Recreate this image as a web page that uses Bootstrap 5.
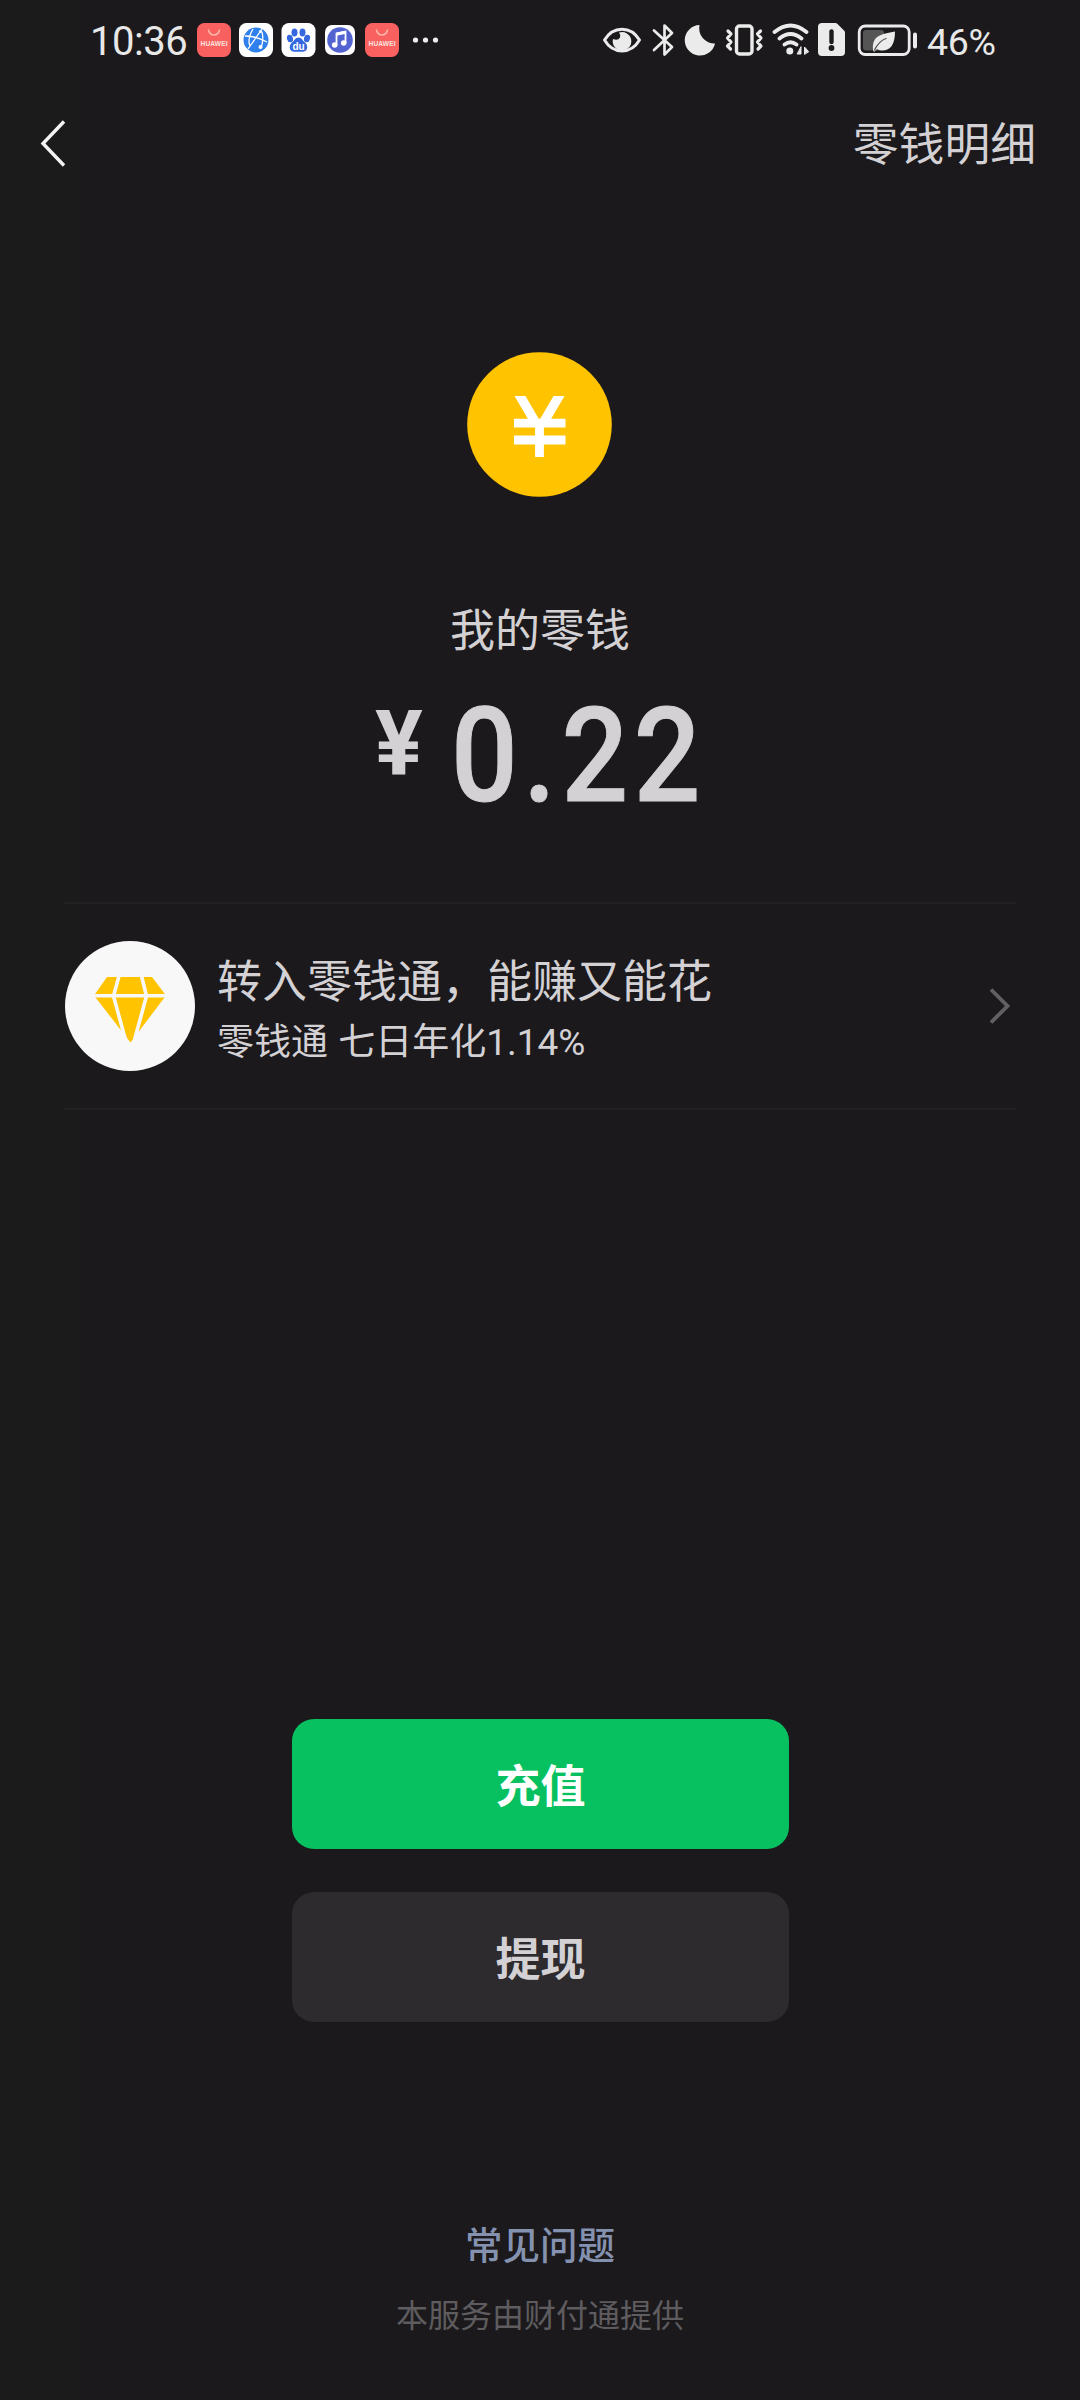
<!DOCTYPE html>
<html lang="zh-CN">
<head>
<meta charset="utf-8">
<meta name="viewport" content="width=device-width, initial-scale=1">
<title>零钱</title>
<link href="https://cdn.jsdelivr.net/npm/bootstrap@5.3.0/dist/css/bootstrap.min.css" rel="stylesheet">
<style>
  body { background: linear-gradient(90deg, #1b1b1b 0, #1b1b1b 74px, #1b191c 84px); color: #d3d1d4; font-family: "Noto Sans CJK SC", sans-serif; height: 2400px; overflow: hidden; }
  svg { display: block; flex: none; }
  .status-bar { height: 80px; padding: 0 84px 0 90px; color: #e8e8e8; font-family: Roboto, sans-serif; }
  .clock { font-size: 40px; line-height: 80px; width: 107px; padding-top: 3px; letter-spacing: -.5px; }
  .battery-text { font-size: 37.5px; line-height: 80px; width: 69px; padding-top: 3px; letter-spacing: -.3px; }
  .top-nav { height: 126px; padding: 0 44px 0 36px; }
  .top-nav a, .line-lg { font-size: 45px; line-height: 60px; color: #d3d1d4; }
  .top-nav a { font-size: 45.8px; padding-bottom: 4px; }
  .coin { margin-top: 146px; }
  .balance-label { margin-top: 100px; }
  .amount { height: 130px; margin-top: 33px; padding-left: 375px; font-family: Roboto, sans-serif; font-weight: 500; line-height: 130px; }
  .currency { font-size: 91px; font-weight: 700; line-height: 106px; width: 76px; transform: scaleX(.98); transform-origin: left; }
  .digits { font-size: 132px; letter-spacing: 6.2px; transform: scaleX(.89); transform-origin: left; -webkit-text-stroke: 1px #d3d1d4; }
  .promo { margin: 81px 64px 0; height: 208px; border-top: 2px solid #222123; border-bottom: 2px solid #222123; padding-right: 4px; padding-left: 1px; }
  .promo-text { margin-left: 22px; padding-top: 9px; }
  .promo-sub { font-family: Roboto, "Noto Sans CJK SC", sans-serif; font-size: 37px; line-height: 61px; padding-top: 3px; word-spacing: 1px; }
  .actions { width: 497px; margin: 609px auto 0; padding-left: 1px; gap: 43px; box-sizing: content-box; }
  .pay-btn { height: 130px; border: 0; border-radius: 22px; font-size: 45px; font-weight: 700; line-height: 60px; padding: 0; }
  .pay-main, .pay-main:hover { background: #07c160; color: #fff; }
  .pay-alt, .pay-alt:hover { background: #2d2b2e; color: #d3d1d4; }
  .faq { margin-top: 193px; font-size: 37.5px; font-weight: 500; line-height: 56px; color: #8492b0; }
  .provider { margin-top: 18px; font-size: 32px; line-height: 48px; color: #5e5c5f; }
</style>
</head>
<body class="d-flex flex-column">
<header class="status-bar d-flex align-items-center justify-content-between">
  <div class="d-flex align-items-center">
    <span class="clock">10:36</span>
    <svg width="246" height="40" viewBox="197 19 246 40">
      <defs>
        <g id="store">
          <rect x="0" y="0" width="34" height="34" rx="7.5" fill="#f8615f"/>
          <path d="M11.5 6.5a5.500 5.500 0 0 0 11 0" fill="none" stroke="#ffb4a8" stroke-width="1.600"/>
          <text x="17" y="22.500" text-anchor="middle" font-family="Liberation Sans" font-weight="700" font-size="6.600" textLength="27" fill="#ffe3df">HUAWEI</text>
        </g>
      </defs>
      <use href="#store" x="197" y="22"/>
      <rect x="239" y="22" width="34" height="34" rx="7.500" fill="#fff"/>
      <circle cx="256" cy="39" r="12.500" fill="#2f80ed"/>
      <path d="M245 35q11 0 22 6M262 28l-14 20M253 28q-6 10-3 17M262 31q2 8-1 16" fill="none" stroke="#fff" stroke-width="1.300"/>
      <circle cx="260.500" cy="46" r="2" fill="#fff"/><circle cx="260.500" cy="30.500" r="1.600" fill="#fff"/>
      <rect x="281.500" y="22" width="34" height="34" rx="7.500" fill="#fff"/>
      <g fill="#3568e0"><ellipse cx="290" cy="37.500" rx="3" ry="3.800" transform="rotate(-15 290 37.500)"/><ellipse cx="294.500" cy="31.500" rx="3" ry="4"/><ellipse cx="302.500" cy="31.500" rx="3" ry="4"/><ellipse cx="307" cy="37.500" rx="3" ry="3.800" transform="rotate(15 307 37.500)"/>
      <path d="M298.500 36.500c3 0 4 3 6.500 5 3 2 3.500 9-2 9.200h-9c-5.500-.2-5-7.200-2-9.200 2.500-2 3.500-5 6.500-5z"/></g>
      <text x="298.500" y="48.500" text-anchor="middle" font-family="Liberation Sans" font-weight="700" font-size="10" fill="#fff">du</text>
      <rect x="325" y="24" width="30" height="30" rx="7" fill="#fff"/>
      <circle cx="340" cy="39" r="12.800" fill="#5364d2"/>
      <path d="M336.500 44v-11.500l9-2v11.500" fill="none" stroke="#fff" stroke-width="1.800"/><path d="M336.500 33.300l9-2" stroke="#fff" stroke-width="3"/>
      <circle cx="334.700" cy="44" r="2.800" fill="#fff"/><circle cx="343.700" cy="42" r="2.800" fill="#fff"/>
      <use href="#store" x="365" y="22"/>
      <g fill="#eee"><circle cx="415.500" cy="39" r="2.600"/><circle cx="425.500" cy="39" r="2.600"/><circle cx="435.500" cy="39" r="2.600"/></g>
    </svg>
  </div>
  <div class="d-flex align-items-center">
    <svg width="326" height="40" viewBox="601 19 326 40" fill="none" stroke="#ebebeb" stroke-width="3" stroke-linecap="round" stroke-linejoin="round">
      <path d="M604.500 39C613 24.500 631 24.500 639.500 39C631 53.500 613 53.500 604.500 39z"/>
      <path d="M619 31.500A9.300 9.300 0 1 1 613 38q5 2 7-1.500q1-2.500-1-5z" fill="#ebebeb" stroke="none"/>
      <path d="M654 29.500l18 16.500-7.500 7.500v-29l7.500 7.500-18 17" stroke-width="2.700"/>
      <path d="M699.500 24A15.300 15.300 0 1 0 715 42.500A15.300 15.300 0 0 1 699.500 24z" fill="#ebebeb" stroke="none"/>
      <rect x="736.500" y="25" width="15.500" height="28" rx="3" stroke-width="3.400"/>
      <path d="M728 30l3 3-3.500 4 3.500 4-3.500 4 3 3M760.500 30l-3 3 3.500 4-3.500 4 3.500 4-3 3" stroke-width="3.200"/>
      <path d="M774.500 31Q790.500 18 806.500 31M779.500 37.500Q790.500 28.500 801.500 37.500M784.500 43.500Q790.500 39 796.500 43.500" stroke-width="3.800"/>
      <circle cx="789.800" cy="50" r="3.500" fill="#ebebeb" stroke="none"/>
      <path d="M801 46v7h-3.500zM804.500 53v-7l4 4.500z" fill="#ebebeb" stroke-width="1"/>
      <path d="M822 22h13.500q1 0 2 1l6.500 6.500q1 1 1 2.200V51q0 4-4 4h-19q-4 0-4-4V26q0-4 4-4z" fill="#ebebeb" stroke="none"/>
      <path d="M831.500 30.500v10.500" stroke="#1b1b1c" stroke-width="4.400"/><circle cx="831.500" cy="47" r="2.900" fill="#1b1b1c" stroke="none"/>
      <rect x="859.200" y="25" width="50" height="28.500" rx="6" stroke-width="2.800"/>
      <rect x="863" y="29" width="21" height="20.500" rx="3" fill="#555" stroke="none"/>
      <path d="M895 30.500Q895 50 881.500 49.500Q878.500 49.300 877 48L874 51L873 49C872 34 881 33.500 895 30.500z" fill="#ebebeb" stroke="none"/>
      <path d="M874.500 49Q879 40 886 37.500" stroke="#555" stroke-width="1.300"/>
      <path d="M915 33.500v12" stroke-width="4"/>
    </svg>
    <span class="battery-text">46%</span>
  </div>
</header>
<nav class="top-nav d-flex align-items-center justify-content-between">
  <svg width="34" height="50" viewBox="0 0 34 50"><path d="M28 3.500L7 25.500l21 22" fill="none" stroke="#f3f3f3" stroke-width="3.400"/></svg>
  <a href="#" class="text-decoration-none">零钱明细</a>
</nav>
<main class="d-flex flex-column">
  <svg class="coin mx-auto" width="146" height="146" viewBox="467 352 146 146">
    <circle cx="539.500" cy="424.500" r="72.300" fill="#ffc300"/>
    <path d="M514 423.200h51.500M514 440h51.500M539.500 424v33" fill="none" stroke="#fff" stroke-width="8.800"/>
    <path d="M514.500 396h11l14 24 14-24h11l-17 29h-16z" fill="#fff"/>
  </svg>
  <div class="balance-label line-lg text-center">我的零钱</div>
  <div class="amount d-flex align-items-start"><span class="currency">¥</span><span class="digits">0.22</span></div>
  <section class="promo d-flex align-items-center">
    <svg width="130" height="130" viewBox="65 941 130 130">
      <circle cx="130" cy="1006" r="65" fill="#f8f8f9"/>
      <path d="M107 977h45l14 18.500-35.500 47L94 995.500z" fill="#ffc300"/>
      <path d="M93 995.800h74M119 976l-5.500 20 12 44M141.500 976l5 20-12 44" fill="none" stroke="#f8f8f9" stroke-width="3.600"/>
    </svg>
    <div class="promo-text flex-grow-1">
      <div class="line-lg">转入零钱通，能赚又能花</div>
      <div class="promo-sub">零钱通 七日年化1.14%</div>
    </div>
    <svg width="24" height="40" viewBox="0 0 24 40"><path d="M3 3.500L19.500 20 3 36.500" fill="none" stroke="#626063" stroke-width="3.800"/></svg>
  </section>
  <div class="actions d-flex flex-column">
    <button type="button" class="btn pay-btn pay-main">充值</button>
    <button type="button" class="btn pay-btn pay-alt">提现</button>
  </div>
  <a href="#" class="faq text-center text-decoration-none">常见问题</a>
  <div class="provider text-center">本服务由财付通提供</div>
</main>
<script src="https://cdn.jsdelivr.net/npm/bootstrap@5.3.0/dist/js/bootstrap.bundle.min.js"></script>
</body>
</html>
